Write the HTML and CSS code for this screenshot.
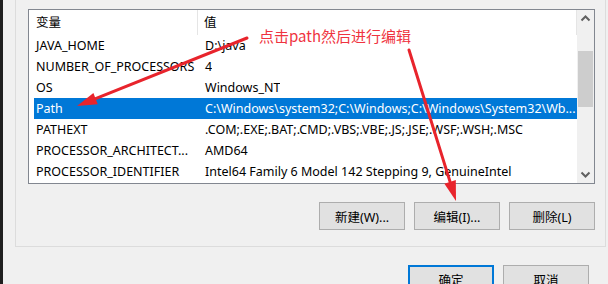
FILE: index.html
```html
<!DOCTYPE html>
<html lang="zh-CN">
<head>
    <meta charset="UTF-8">
    <title>环境变量</title>
    <link rel="stylesheet" href="styles.css">
</head>
<body>

    <div class="window">
        <div class="edge"></div>
        <div class="content">
            <div class="group">
                <div class="listbox">
                    <div class="list">
                        <div class="header">
                            <div class="col-name">变量</div>
                            <div class="col-value">值</div>
                        </div>
                        <div class="row">
                            <div class="col-name">JAVA_HOME</div>
                            <div class="col-value">D:\java</div>
                        </div>
                        <div class="row">
                            <div class="col-name">NUMBER_OF_PROCESSORS</div>
                            <div class="col-value">4</div>
                        </div>
                        <div class="row">
                            <div class="col-name">OS</div>
                            <div class="col-value">Windows_NT</div>
                        </div>
                        <div class="row selected">
                            <div class="col-name">Path</div>
                            <div class="col-value">C:\Windows\system32;C:\Windows;C:\Windows\System32\Wb...</div>
                        </div>
                        <div class="row">
                            <div class="col-name">PATHEXT</div>
                            <div class="col-value">.COM;.EXE;.BAT;.CMD;.VBS;.VBE;.JS;.JSE;.WSF;.WSH;.MSC</div>
                        </div>
                        <div class="row">
                            <div class="col-name">PROCESSOR_ARCHITECT...</div>
                            <div class="col-value">AMD64</div>
                        </div>
                        <div class="row">
                            <div class="col-name">PROCESSOR_IDENTIFIER</div>
                            <div class="col-value">Intel64 Family 6 Model 142 Stepping 9, GenuineIntel</div>
                        </div>
                    </div>
                    <div class="scrollbar">
                        <svg class="arrow-btn" width="17" height="17" viewBox="0 0 17 17">
                            <path d="M4.5 10.5 L8.5 6.5 L12.5 10.5" fill="none" stroke="#606060" stroke-width="2"/>
                        </svg>
                        <div class="track">
                            <div class="thumb"></div>
                        </div>
                        <svg class="arrow-btn" width="17" height="17" viewBox="0 0 17 17">
                            <path d="M4.5 6.5 L8.5 10.5 L12.5 6.5" fill="none" stroke="#606060" stroke-width="2"/>
                        </svg>
                    </div>
                </div>
                <div class="actions">
                    <button class="btn">新建(W)...</button>
                    <button class="btn">编辑(I)...</button>
                    <button class="btn">删除(L)</button>
                </div>
            </div>
            <div class="footer">
                <button class="btn default">确定</button>
                <button class="btn">取消</button>
            </div>
        </div>
    </div>

    <!-- 标注：红色箭头和说明 -->
    <svg class="marks" width="608" height="284" viewBox="0 0 608 284">
        <line x1="247" y1="38" x2="95.6" y2="98.6" stroke="#e8242c" stroke-width="3" stroke-linecap="round"/>
        <polygon points="77,106 97.8,104.2 93.4,93" fill="#e8242c"/>
        <line x1="409" y1="50" x2="450.1" y2="181.9" stroke="#e8242c" stroke-width="3" stroke-linecap="round"/>
        <polygon points="456,201 444.4,183.7 455.8,180.1" fill="#e8242c"/>
    </svg>
    <div class="note">点击path然后进行编辑</div>

</body>
</html>
```

FILE: styles.css
```css
body {
    margin: 0;
    width: 608px;
    height: 284px;
    overflow: hidden;
    background-color: #f0f0f0;
    font-family: "Noto Sans", "Noto Sans CJK SC", sans-serif;
    font-size: 12.5px;
    color: #000;
}
.window {
    display: flex;
    height: 284px;
}
.edge {
    width: 3px;
    background-color: #1f1f1f;
}
.content {
    flex: 1;
}
.group {
    margin-left: 12px;
    margin-right: 2px;
    padding: 9px 10px 16px 12px;
    border: 1px solid #dcdcdc;
    border-top: none;
}
.listbox {
    display: flex;
    height: 173px;
    border: 1px solid #828790;
    background-color: #fff;
}
.list {
    flex: 1;
    overflow: hidden;
}
.header, .row {
    display: flex;
    height: 21px;
    align-items: center;
    white-space: nowrap;
}
.header {
    height: 25px;
}
.header .col-name {
    width: 161px;
    padding-left: 7px;
    height: 25px;
    line-height: 25px;
    border-right: 1px solid #e5e5e5;
}
.row {
    margin-left: 5px;
}
.row .col-name {
    width: 163px;
    padding-left: 2px;
}
.col-value {
    padding-left: 6px;
    overflow: hidden;
}
.header .col-value {
    flex: 1;
    height: 25px;
    line-height: 25px;
    border-right: 1px solid #e5e5e5;
}
.selected {
    background-color: #0078d7;
    color: #fff;
}
.scrollbar {
    width: 17px;
    display: flex;
    flex-direction: column;
    background-color: #f0f0f0;
}
.arrow-btn {
    display: block;
}
.track {
    flex: 1;
    padding-top: 24px;
}
.thumb {
    margin: 0 1px;
    height: 56px;
    background-color: #cdcdcd;
}
.actions {
    display: flex;
    justify-content: flex-end;
    gap: 9px;
    margin-top: 18px;
}
.btn {
    width: 86px;
    height: 28px;
    padding: 0;
    font-family: "Noto Sans", "Noto Sans CJK SC", sans-serif;
    font-size: 12.5px;
    color: #000;
    background-color: #e1e1e1;
    border: 1px solid #adadad;
}
.btn.default {
    border: 2px solid #0078d7;
}
.footer {
    display: flex;
    justify-content: flex-end;
    gap: 9px;
    margin-top: 18px;
    padding-right: 19px;
}
.marks {
    position: absolute;
    left: 0;
    top: 0;
    pointer-events: none;
}
.note {
    position: absolute;
    left: 259px;
    top: 25px;
    font-family: "Noto Sans CJK SC", sans-serif;
    font-size: 15px;
    color: #ef3340;
    white-space: nowrap;
}
```
